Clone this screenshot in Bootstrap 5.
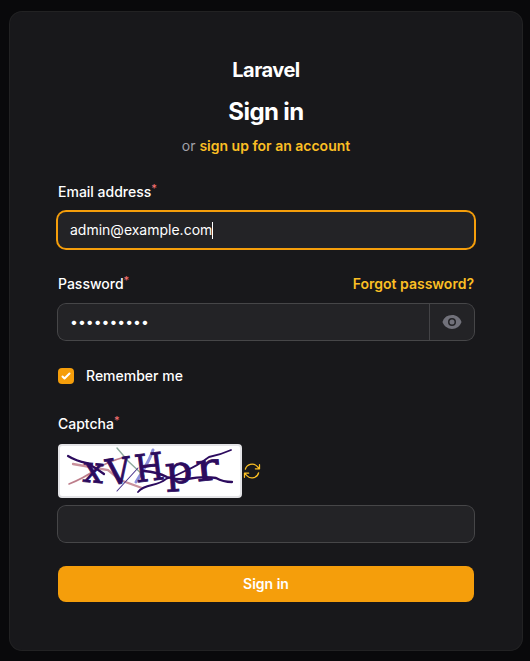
<!DOCTYPE html>
<html lang="en">
<head>
<meta charset="utf-8">
<meta name="viewport" content="width=device-width, initial-scale=1">
<title>Sign in - Laravel</title>
<link href="https://cdn.jsdelivr.net/npm/bootstrap@5.3.0/dist/css/bootstrap.min.css" rel="stylesheet">
<style>
  body { background: #09090b; color: #fff; font-family: Inter, "Liberation Sans", sans-serif; font-size: 14px; line-height: 20px; min-height: 661px; }
  .login-panel { width: 512px; margin: 12px 8px 11px 10px; padding: 48px; background: #18181b; border-radius: 12px; box-shadow: 0 0 0 1px rgba(255,255,255,.1); }
  .brand { font-size: 20px; line-height: 20px; letter-spacing: -.5px; }
  .title { font-size: 24px; line-height: 32px; letter-spacing: -.6px; }
  .muted { color: #a1a1aa; }
  .fields { gap: 24px; }
  .field-label { line-height: 24px; font-weight: 500; height: 24px; }
  .field-label sup { color: #f87171; font-size: 11px; top: -.42em; }
  .amber-link, .amber-link:hover { color: #fbbf24; font-weight: 600; }
  .field-box { height: 36px; border-radius: 8px; background: rgba(255,255,255,.05); box-shadow: 0 0 0 1px rgba(255,255,255,.2); overflow: hidden; }
  .field-box.active { box-shadow: 0 0 0 2px #f59e0b; }
  .field-box .form-control, .field-box .form-control:focus { background: transparent; color: #fff; font-size: 14px; line-height: 24px; padding: 6px 12px; border: 0; box-shadow: none; border-radius: 0; height: 36px; }
  .field-box .form-control[type="password"] { padding: 5px 12px 7px; }
  .caret { width: 1px; height: 17px; background: #fff; }
  .reveal, .reveal:hover { width: 45px; border: 0; border-left: 1px solid rgba(255,255,255,.15); border-radius: 0; color: #71717a; }
  .tick { width: 16px; height: 16px; border-radius: 4px; background: #f59e0b; }
  .captcha-img { width: 184px; height: 54px; background: #fff; border: 2px solid #e4e4e7; border-radius: 4px; overflow: visible; }
  .submit, .submit:hover { height: 36px; border: 0; border-radius: 8px; background: #f59e0b; color: #fff; font-size: 14px; line-height: 20px; font-weight: 600; }
</style>
</head>
<body>
<main class="login-panel">
  <header class="text-center mb-4">
    <div class="brand fw-bold mb-3">Laravel</div>
    <h1 class="title fw-bold mb-2">Sign in</h1>
    <p class="muted mb-0">or <a class="amber-link text-decoration-none" href="#">sign up for an account</a></p>
  </header>
  <form class="fields d-flex flex-column">
    <div class="d-flex flex-column gap-2">
      <div class="field-label">Email address<sup>*</sup></div>
      <div class="field-box active">
        <div class="form-control d-flex align-items-center"><span>admin@example.com</span><span class="caret"></span></div>
      </div>
    </div>
    <div class="d-flex flex-column gap-2">
      <div class="d-flex justify-content-between">
        <label class="field-label" for="password">Password<sup>*</sup></label>
        <a class="field-label amber-link text-decoration-none" href="#">Forgot password?</a>
      </div>
      <div class="field-box d-flex">
        <input class="form-control" id="password" type="password" value="passwordab">
        <button class="reveal btn p-0 flex-shrink-0 d-flex align-items-center justify-content-center" type="button" aria-label="Show password">
          <svg width="20" height="20" viewBox="0 0 20 20" fill="currentColor"><path d="M10 12.5a2.5 2.5 0 1 0 0-5 2.5 2.5 0 0 0 0 5Z"/><path fill-rule="evenodd" d="M.664 10.59a1.651 1.651 0 0 1 0-1.186A10.004 10.004 0 0 1 10 3c4.257 0 7.893 2.66 9.336 6.41.147.381.146.804 0 1.186A10.004 10.004 0 0 1 10 17c-4.257 0-7.893-2.66-9.336-6.41ZM14 10a4 4 0 1 1-8 0 4 4 0 0 1 8 0Z"/></svg>
        </button>
      </div>
    </div>
    <div class="field-label d-flex align-items-center">
      <span class="tick d-flex me-2"><svg width="16" height="16" viewBox="0 0 16 16" fill="#fff"><path d="M12.207 4.793a1 1 0 0 1 0 1.414l-5 5a1 1 0 0 1-1.414 0l-2-2a1 1 0 0 1 1.414-1.414L6.5 9.086l4.293-4.293a1 1 0 0 1 1.414 0z"/></svg></span>
      <span class="ms-1">Remember me</span>
    </div>
    <div class="d-flex flex-column gap-2">
      <label class="field-label" for="captcha">Captcha<sup>*</sup></label>
      <div class="d-flex align-items-center">
        <svg class="captcha-img" viewBox="0 0 180 50" fill="none">
          <g stroke-linecap="round">
            <path d="M13 18 48 24 60 34 82 42" stroke="#c9929c" stroke-width="2.3"/>
            <path d="M9 38Q24 32 35 24T65 11" stroke="#bd7d8a" stroke-width="1.6"/>
            <path d="M57 2 68 15 84 30" stroke="#8eaa9d" stroke-width="1.4"/>
            <path d="M93 4Q90 14 76 36" stroke="#8c8fdc" stroke-width="3"/>
            <path d="M57 45 78 22" stroke="#49338c" stroke-width="1.1"/>
          </g>
          <g fill="#2c0b5e" stroke="#2c0b5e" stroke-width=".8" font-family="DejaVu Serif, serif">
            <text transform="translate(22 35.5) rotate(5)" font-size="37">x</text>
            <text transform="translate(48 39.5) rotate(-8) scale(.95 1)" font-size="36">V</text>
            <text transform="translate(76.5 36.5) rotate(-7) scale(.88 1)" font-size="38">H</text>
            <text transform="translate(106 38) rotate(-4) scale(1.12 1)" font-size="38">p</text>
            <text transform="translate(137 35.5) rotate(-6) scale(1.28 1)" font-size="38">r</text>
          </g>
          <g stroke="#2c0b5e" stroke-linecap="round">
            <path d="M8 10Q16 15 27 17Q36 22 44 28" stroke-width="2.2"/>
            <path d="M78 46Q82 41 92 39Q101 37 106 33Q118 29 127 24Q137 20 149 11Q160 9 171 4" stroke-width="1.8"/>
            <path d="M84 25Q97 26 107 31Q117 34 127 33Q144 30 156 32Q163 36 172 36" stroke-width="2.3"/>
          </g>
        </svg>
        <a href="#" class="amber-link d-flex" aria-label="Refresh captcha">
          <svg width="20" height="20" viewBox="0 0 24 24" fill="none" stroke="currentColor" stroke-width="1.5" stroke-linecap="round" stroke-linejoin="round"><path d="M16.023 9.348h4.992v-.001M2.985 19.644v-4.992m0 0h4.992m-4.993 0 3.181 3.183a8.25 8.25 0 0 0 13.803-3.7M4.031 9.865a8.25 8.25 0 0 1 13.803-3.7l3.181 3.182m0-4.991v4.99"/></svg>
        </a>
      </div>
      <div class="field-box"><input class="form-control" id="captcha" type="text"></div>
    </div>
    <button class="submit btn w-100 p-0" type="button">Sign in</button>
  </form>
</main>
<script src="https://cdn.jsdelivr.net/npm/bootstrap@5.3.0/dist/js/bootstrap.bundle.min.js"></script>
</body>
</html>
